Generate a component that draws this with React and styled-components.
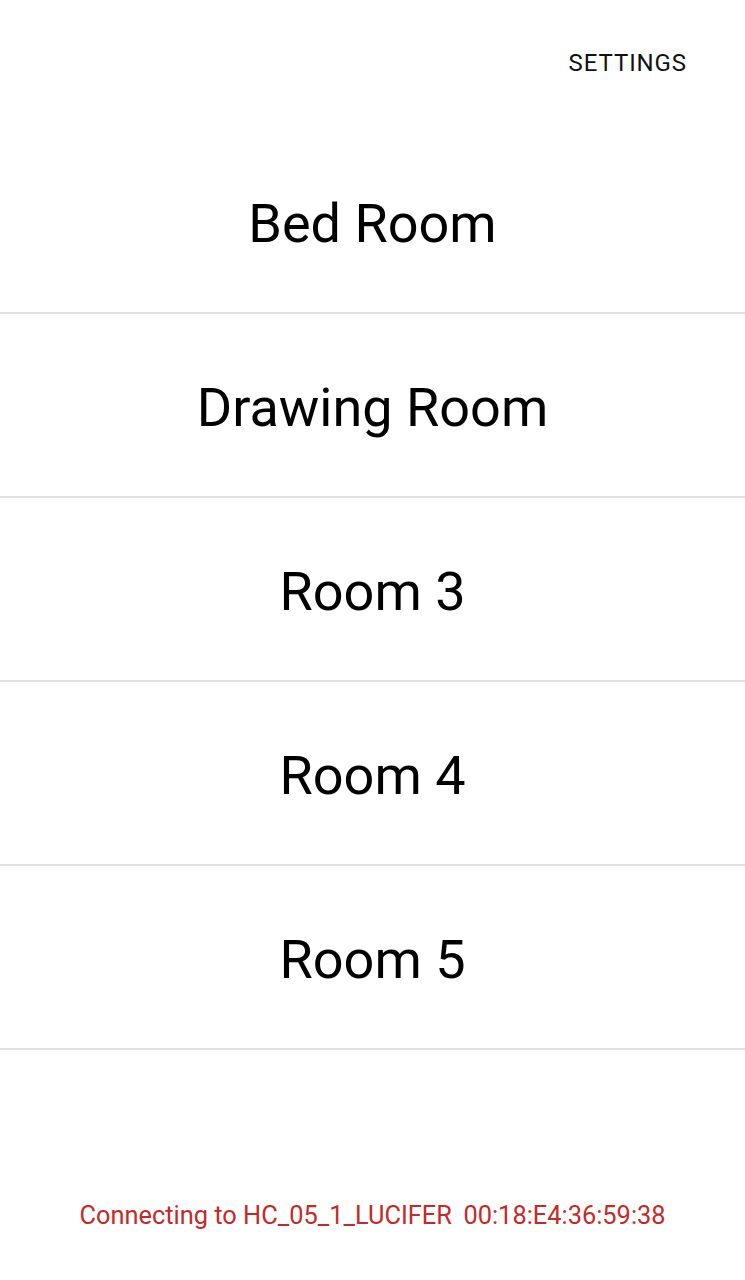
import React from "react";
import styled, { createGlobalStyle } from "styled-components";

const GlobalStyle = createGlobalStyle`
  html, body {
    margin: 0;
    padding: 0;
    background: #fff;
  }
  body {
    font-family: Roboto, "Noto Sans", sans-serif;
  }
`;

const rooms = ["Bed Room", "Drawing Room", "Room 3", "Room 4", "Room 5"];

function App() {
  return (
    <Screen>
      <GlobalStyle />
      <TopBar>
        <SettingsButton>SETTINGS</SettingsButton>
      </TopBar>
      <RoomList>
        {rooms.map((room) => (
          <RoomRow key={room}>{room}</RoomRow>
        ))}
      </RoomList>
      <Status>Connecting to HC_05_1_LUCIFER{"\u2009 "}00:18:E4:36:59:38</Status>
    </Screen>
  );
}

const Screen = styled.div`
  width: 745px;
  height: 1280px;
  display: flex;
  flex-direction: column;
  background: #fff;
  overflow: hidden;
`;

const TopBar = styled.div`
  height: 130px;
  flex-shrink: 0;
  display: flex;
  justify-content: flex-end;
  align-items: flex-start;
  padding-right: 58px;
  box-sizing: border-box;
`;

const SettingsButton = styled.div`
  margin-top: 49px;
  font-size: 24px;
  font-weight: 400;
  letter-spacing: 0.9px;
  color: #111;
`;

const RoomList = styled.div`
  display: flex;
  flex-direction: column;
`;

const RoomRow = styled.div`
  height: 184px;
  box-sizing: border-box;
  border-bottom: 2px solid #e0e0e0;
  display: flex;
  align-items: center;
  justify-content: center;
  padding-top: 4px;
  font-size: 54px;
  color: #000;
`;

const Status = styled.div`
  margin-top: auto;
  margin-bottom: 50px;
  text-align: center;
  font-size: 25.4px;
  color: #c42a2a;
`;

export default App;
